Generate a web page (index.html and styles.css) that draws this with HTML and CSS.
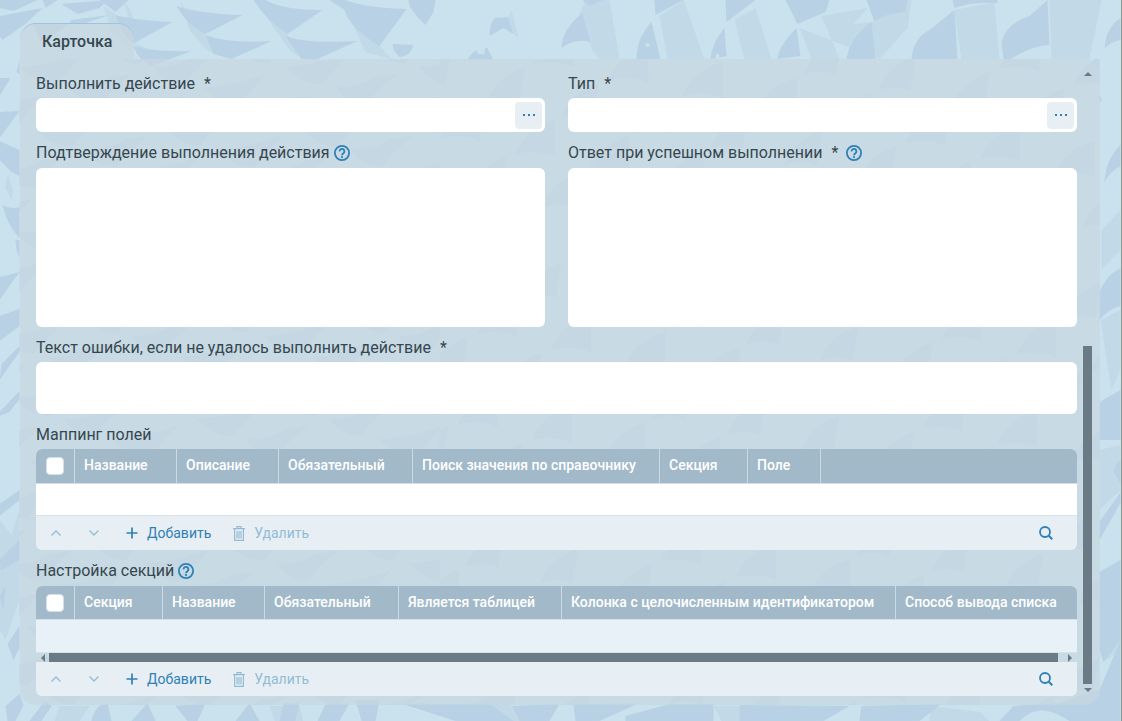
FILE: index.html
```html
<!DOCTYPE html>
<html lang="ru">
<head>
    <meta charset="UTF-8">
    <meta name="viewport" content="width=device-width, initial-scale=1.0">
    <title>Карточка</title>
    <link rel="stylesheet" href="styles.css">
</head>
<body>
    <svg class="backdrop" viewBox="0 0 1122 721" preserveAspectRatio="xMidYMid slice" aria-hidden="true">
        <defs>
            <pattern id="scales" width="86" height="64" patternUnits="userSpaceOnUse" patternTransform="rotate(-14)">
                <path d="M4 6Q34 12 70 8L34 32Q14 26 4 6z"/>
                <path d="M47 38Q70 44 86 38L86 52L74 62Q54 58 47 38zM0 38L24 40L0 52z"/>
            </pattern>
            <pattern id="folds" width="76" height="92" patternUnits="userSpaceOnUse" patternTransform="rotate(12)">
                <path d="M4 44Q8 18 36 2L44 38Q24 34 4 44z"/>
                <path d="M42 90Q44 66 72 48L74 84Q58 80 42 90z"/>
            </pattern>
        </defs>
        <g class="backdrop-mid">
            <path d="M125 0Q140 24 134 44L150 62L170 59L133 42zM346 8L380 46L392 59L366 52zM580 14L593 50L600 59L620 59L610 0L586 0zM512 10L519 38L505 24zM660 16L668 59L705 59L684 0zM735 20L745 59L772 59L756 8zM800 28L812 59L840 59L822 16L868 8L854 24L876 22L878 0L912 0L908 28L880 59zM955 10L962 59L1000 59L995 2zM1050 0L1052 59L1090 59L1102 0zM1102 230L1121 210V250L1102 270zM1101 320L1121 310V370L1112 390zM1100 450L1121 445V490L1100 510zM1100 600L1121 580V650L1104 662z"/>
            <path d="M180 0L188 14L205 32L214 54L205 48L190 30zM262 10L274 18L288 34L300 57L290 50zM104 6L116 14L122 34L135 48L128 49L112 30zM8 174L14 190L12 200L6 188z"/>
            <path d="M0 520L12 535L20 510V600L6 640L0 630zM60 706L90 706L80 721H55zM270 706L300 706L304 721H275zM480 706L510 704L520 721H484zM714 706H745V721H722zM930 706L980 712L990 721H930z"/>
        </g>
        <g class="backdrop-dark">
            <rect class="backdrop-soft" x="20" y="59" width="420" height="646" fill="url(#scales)"/>
            <rect class="backdrop-soft" x="440" y="59" width="660" height="646" fill="url(#folds)"/>
            <path d="M0 0H38L14 11L0 8zM0 16L43 8L26 24L3 40L0 36zM43 0H58L46 8zM40 42Q66 30 72 20L110 15L86 23H34zM62 4L108 0L100 8L78 14z"/>
            <path d="M100 0L129 0L116 12zM116 15Q132 20 173 22L133 44Q120 32 116 15zM177 6Q200 14 243 15L206 34Q188 26 177 6zM254 0L266 0Q282 10 323 10L288 34Q266 20 254 0zM206 35Q230 44 272 41L232 59L214 54zM286 36Q306 44 358 41L318 59H302zM134 46Q152 52 192 51L152 66Q138 60 134 46z"/>
            <path d="M330 0H346Q366 8 407 9L380 46Q350 28 345 10zM393 44L414 45Q411 56 400 57L394 50zM409 0H436L434 12L426 25Q416 16 410 6zM490 36Q490 20 498 17H508L514 34L504 28zM468 60Q474 48 488 48L494 60zM562 48Q562 30 583 13L591 42Q576 38 562 48zM583 0L604 0L590 6z"/>
            <path d="M637 59Q637 38 652 22L661 59zM655 0H684L656 15zM711 59Q712 44 725 28L727 56zM726 0H756L727 22zM778 59Q779 46 797 28L801 56zM786 0H830L826 12L798 24zM847 59Q850 38 872 22L876 59zM867 0H908L906 12Q882 14 875 22zM912 59Q914 38 930 30L955 10L958 59zM953 0H998V3Q970 2 955 8zM1002 42Q1006 24 1030 16L1048 0L1050 45Q1030 46 1012 59H1004zM1105 49Q1106 28 1121 18V40Q1110 42 1105 49z"/>
            <path d="M0 78L11 78L0 96zM20 60L17 72L20 74zM0 112L20 111L0 138zM0 141L20 150V176L12 172L0 160zM3 205Q12 210 20 207V238Q8 226 3 205zM16 240H20V258L17 250zM0 277L20 272L0 300zM0 316L20 309V326L0 341zM2 364L20 346V352L0 380zM0 412L20 391V399L10 412L0 416zM0 504L20 490V500L0 516zM0 560L20 540V560L2 570zM8 644L20 626V648L14 660zM0 596L6 586L4 610zM6 706L20 694L24 705L16 721H8z"/>
            <path d="M30 721L46 700L52 706L42 721zM92 721Q96 704 108 703L112 721zM132 721L148 703L156 721zM176 706L206 703L198 721H188zM236 721L250 703L260 721zM284 703H300L296 721H280zM326 704L350 703L340 721H318zM356 700H380L376 721H362zM400 703L450 704L490 703L514 721H456zM512 706L560 704L550 721H520zM574 704L640 703L600 721H576zM626 716L670 704H714V721H626zM740 705L850 706L824 721H740zM862 706L942 704L920 721H860zM1014 706L1060 703Q1080 694 1100 690L1121 640V721H1070Q1040 700 1020 721H1000z"/>
            <path d="M1100 59V94L1102 100L1100 104zM1105 182Q1106 160 1121 145V166Q1110 172 1105 182zM1100 292Q1106 276 1121 268V306Q1110 308 1100 320zM1100 402L1121 390V440L1100 440zM1114 471Q1116 464 1121 460V484zM1100 522L1121 492V503L1100 540zM1100 572L1121 560V640L1104 662L1100 650z"/>
        </g>
        <g class="backdrop-light">
            <circle cx="648" cy="45" r="2"/>
            <circle cx="718" cy="56" r="2"/>
            <path d="M497 11L507 9L508 17L498 18zM477 46L486 45L485 54L478 54z"/>
        </g>
    </svg>

    <svg class="sprite" aria-hidden="true">
        <symbol id="icon-help" viewBox="0 0 16 16">
            <circle cx="8" cy="8" r="7.1" fill="none" stroke="currentColor" stroke-width="1.8"/>
            <path d="M5.6 6.4a2.4 2.4 0 1 1 3.8 1.8C8.5 8.800 8 9.200 8 10.200" fill="none" stroke="currentColor" stroke-width="1.8"/>
            <circle cx="8" cy="12.100" r="1.1" fill="currentColor"/>
        </symbol>
        <symbol id="icon-dots" viewBox="0 0 12 4">
            <path d="M0 1h2v2H0zM5 1h2v2H5zM10 1h2v2h-2z" fill="currentColor"/>
        </symbol>
        <symbol id="icon-up" viewBox="0 0 12 8">
            <path d="M1.500 6.500L6 2l4.500 4.500" fill="none" stroke="currentColor" stroke-width="1.300"/>
        </symbol>
        <symbol id="icon-down" viewBox="0 0 12 8">
            <path d="M1.500 1.500L6 6l4.500-4.500" fill="none" stroke="currentColor" stroke-width="1.300"/>
        </symbol>
        <symbol id="icon-plus" viewBox="0 0 12 12">
            <path d="M6 0.500v11M0.500 6h11" fill="none" stroke="currentColor" stroke-width="1.700"/>
        </symbol>
        <symbol id="icon-trash" viewBox="0 0 12 15">
            <path d="M0 2.700h12M4 2.500V0.700h4v1.800M1.600 3v11.300h8.800V3M4 5v7.500M6 5v7.500M8 5v7.500" fill="none" stroke="currentColor" stroke-width="1.200"/>
        </symbol>
        <symbol id="icon-search" viewBox="0 0 14 14">
            <circle cx="6" cy="6" r="5" fill="none" stroke="currentColor" stroke-width="1.800"/>
            <path d="M9.500 9.500L13.300 13.300" stroke="currentColor" stroke-width="2"/>
        </symbol>
    </svg>

    <main class="page">
        <div class="tabs" role="tablist">
            <button type="button" class="tab" role="tab" aria-selected="true">Карточка</button>
        </div>

        <div class="panel">
            <form class="form">
                <div class="columns">
                    <div class="field">
                        <label class="label" for="action">Выполнить действие <span class="required">*</span></label>
                        <div class="lookup">
                            <input type="text" id="action" class="lookup-input">
                            <button type="button" class="lookup-button" aria-label="Выбрать действие"><svg width="12" height="4"><use href="#icon-dots"/></svg></button>
                        </div>
                    </div>
                    <div class="field">
                        <label class="label" for="type">Тип <span class="required">*</span></label>
                        <div class="lookup">
                            <input type="text" id="type" class="lookup-input">
                            <button type="button" class="lookup-button" aria-label="Выбрать тип"><svg width="12" height="4"><use href="#icon-dots"/></svg></button>
                        </div>
                    </div>
                    <div class="field">
                        <div class="label-row">
                            <label class="label" for="confirm">Подтверждение выполнения действия</label>
                            <button type="button" class="help" aria-label="Справка"><svg width="16" height="16"><use href="#icon-help"/></svg></button>
                        </div>
                        <textarea id="confirm" class="textarea textarea-tall"></textarea>
                    </div>
                    <div class="field">
                        <div class="label-row">
                            <label class="label" for="answer">Ответ при успешном выполнении <span class="required">*</span></label>
                            <button type="button" class="help help-required" aria-label="Справка"><svg width="16" height="16"><use href="#icon-help"/></svg></button>
                        </div>
                        <textarea id="answer" class="textarea textarea-tall"></textarea>
                    </div>
                </div>

                <div class="field">
                    <label class="label" for="error">Текст ошибки, если не удалось выполнить действие <span class="required">*</span></label>
                    <textarea id="error" class="textarea textarea-short"></textarea>
                </div>

                <section class="field">
                    <div class="label" id="mapping">Маппинг полей</div>
                    <div class="grid">
                        <div class="table-wrap">
                            <table class="table" aria-labelledby="mapping">
                                <colgroup>
                                    <col class="col-check">
                                    <col class="col-name">
                                    <col class="col-name">
                                    <col class="col-flag">
                                    <col class="col-lookup">
                                    <col class="col-section">
                                    <col class="col-field">
                                    <col>
                                </colgroup>
                                <thead>
                                    <tr>
                                        <th class="check-cell"><input type="checkbox" class="check" aria-label="Выбрать все"></th>
                                        <th>Название</th>
                                        <th>Описание</th>
                                        <th>Обязательный</th>
                                        <th>Поиск значения по справочнику</th>
                                        <th>Секция</th>
                                        <th>Поле</th>
                                        <th></th>
                                    </tr>
                                </thead>
                                <tbody>
                                    <tr><td colspan="8"></td></tr>
                                </tbody>
                            </table>
                        </div>
                        <div class="toolbar">
                            <button type="button" class="tool tool-move" disabled aria-label="Вверх"><svg width="12" height="8"><use href="#icon-up"/></svg></button>
                            <button type="button" class="tool tool-move" disabled aria-label="Вниз"><svg width="12" height="8"><use href="#icon-down"/></svg></button>
                            <button type="button" class="tool tool-add"><svg width="12" height="12"><use href="#icon-plus"/></svg>Добавить</button>
                            <button type="button" class="tool tool-delete" disabled><svg width="12" height="15"><use href="#icon-trash"/></svg>Удалить</button>
                            <button type="button" class="tool tool-search" aria-label="Поиск"><svg width="14" height="14"><use href="#icon-search"/></svg></button>
                        </div>
                    </div>
                </section>

                <section class="field">
                    <div class="label-row">
                        <div class="label" id="sections">Настройка секций</div>
                        <button type="button" class="help" aria-label="Справка"><svg width="16" height="16"><use href="#icon-help"/></svg></button>
                    </div>
                    <div class="grid">
                        <div class="table-wrap">
                            <table class="table table-tinted" aria-labelledby="sections">
                                <colgroup>
                                    <col class="col-check">
                                    <col class="col-section">
                                    <col class="col-name">
                                    <col class="col-flag">
                                    <col class="col-table">
                                    <col class="col-id">
                                    <col>
                                </colgroup>
                                <thead>
                                    <tr>
                                        <th class="check-cell"><input type="checkbox" class="check" aria-label="Выбрать все"></th>
                                        <th>Секция</th>
                                        <th>Название</th>
                                        <th>Обязательный</th>
                                        <th>Является таблицей</th>
                                        <th>Колонка с целочисленным идентификатором</th>
                                        <th>Способ вывода списка</th>
                                    </tr>
                                </thead>
                                <tbody>
                                    <tr><td colspan="7"></td></tr>
                                </tbody>
                            </table>
                        </div>
                        <div class="hscroll" aria-hidden="true">
                            <span class="arrow arrow-left"></span>
                            <span class="hscroll-thumb"></span>
                            <span class="arrow arrow-right"></span>
                        </div>
                        <div class="toolbar">
                            <button type="button" class="tool tool-move" disabled aria-label="Вверх"><svg width="12" height="8"><use href="#icon-up"/></svg></button>
                            <button type="button" class="tool tool-move" disabled aria-label="Вниз"><svg width="12" height="8"><use href="#icon-down"/></svg></button>
                            <button type="button" class="tool tool-add"><svg width="12" height="12"><use href="#icon-plus"/></svg>Добавить</button>
                            <button type="button" class="tool tool-delete" disabled><svg width="12" height="15"><use href="#icon-trash"/></svg>Удалить</button>
                            <button type="button" class="tool tool-search" aria-label="Поиск"><svg width="14" height="14"><use href="#icon-search"/></svg></button>
                        </div>
                    </div>
                </section>
            </form>

            <div class="vscroll" aria-hidden="true">
                <span class="arrow arrow-up"></span>
                <div class="vscroll-track">
                    <span class="vscroll-thumb"></span>
                </div>
                <span class="arrow arrow-down"></span>
            </div>
        </div>
    </main>
</body>
</html>
```

FILE: styles.css
```css
* {
    box-sizing: border-box;
}

body {
    margin: 0;
    min-height: 100vh;
    font-family: Roboto, "Liberation Sans", sans-serif;
    font-size: 16px;
    color: #36474f;
    background-color: #cae1ee;
    border-right: 1px solid #8b9a8c;
}

button, input, textarea {
    font: inherit;
    color: inherit;
    margin: 0;
    padding: 0;
    border: none;
    outline: none;
    background: none;
}

button {
    cursor: pointer;
}

svg {
    display: block;
}

.sprite {
    display: none;
}

/* background */
.backdrop {
    position: absolute;
    top: 0;
    left: 0;
    width: calc(100% - 1px);
    height: 100%;
    z-index: -1;
}

.backdrop-dark, .backdrop pattern {
    fill: #b9d1e4;
}

.backdrop-soft {
    opacity: 0.7;
}

.backdrop-mid {
    fill: #c2d9e8;
}

.backdrop-light {
    fill: #cae1ee;
}

.page {
    padding: 23px 21px 16px 20px;
}

/* tabs */
.tabs {
    display: flex;
}

.tab {
    height: 36px;
    padding: 0 22px;
    font-weight: 500;
    border-top: 1px solid #9fc3da;
    border-radius: 16px 16px 0 0;
    background-color: rgba(200, 215, 224, 0.7);
}

.panel {
    display: flex;
    gap: 6px;
    padding: 11px 8px 9px 16px;
    border-radius: 0 16px 16px 16px;
    background-color: rgba(200, 215, 224, 0.7);
}

/* form */
.form {
    flex: 1;
    min-width: 0;
    display: flex;
    flex-direction: column;
    gap: 7px;
}

.columns {
    display: grid;
    grid-template-columns: 1fr 1fr;
    gap: 7px 23px;
}

.field {
    display: flex;
    flex-direction: column;
    min-width: 0;
}

.label {
    line-height: 28px;
}

.label-row {
    display: flex;
    align-items: flex-start;
    gap: 4px;
    height: 29px;
}

.required {
    margin-left: 5px;
}

.help {
    display: flex;
    align-items: center;
    height: 28px;
    color: #2f80b5;
}

.help-required {
    margin-left: 4px;
}

.lookup {
    display: flex;
    align-items: center;
    height: 34px;
    padding: 3px;
    border-radius: 6px;
    background-color: #fff;
}

.lookup-input {
    flex: 1;
    min-width: 0;
    padding: 0 8px;
}

.lookup-button {
    display: flex;
    align-items: center;
    justify-content: center;
    width: 27px;
    height: 27px;
    border-radius: 4px;
    color: #2f80b5;
    background-color: #e7eff5;
}

.textarea {
    display: block;
    width: 100%;
    padding: 8px;
    border-radius: 6px;
    background-color: #fff;
    resize: none;
}

.textarea-tall {
    height: 159px;
}

.textarea-short {
    height: 52px;
}

/* tables */
.grid {
    border-radius: 6px;
    overflow: hidden;
}

.table-wrap {
    overflow: hidden;
}

.table {
    width: 100%;
    table-layout: fixed;
    border-collapse: separate;
    border-spacing: 0;
    font-size: 14px;
    background-color: #fff;
}

.col-check {
    width: 39px;
}

.col-name {
    width: 102px;
}

.col-flag {
    width: 134px;
}

.col-lookup {
    width: 247px;
}

.col-section {
    width: 88px;
}

.col-field {
    width: 73px;
}

.col-table {
    width: 163px;
}

.col-id {
    width: 334px;
}

.table th {
    height: 35px;
    padding: 0 0 2px 9px;
    font-weight: 500;
    text-align: left;
    white-space: nowrap;
    color: #fff;
    background-color: #a2b9c9;
    border-right: 1px solid #cbdbe5;
    border-bottom: 1px solid #d3e0e9;
}

.table th:last-child {
    border-right: none;
}

.table .check-cell {
    padding: 0 10px;
}

.table td {
    height: 32px;
    padding: 0;
    border-bottom: 1px solid #d7e3eb;
}

.table-tinted {
    background-color: #e9f1f8;
}

.table-tinted th {
    height: 34px;
}

.table-tinted td {
    height: 33px;
}

.check {
    appearance: none;
    display: block;
    width: 18px;
    height: 18px;
    border: 1px solid #d3e0e9;
    border-radius: 4px;
    background-color: #fff;
}

.toolbar {
    display: flex;
    align-items: center;
    height: 34px;
    padding: 0 24px 0 14px;
    font-size: 14px;
    color: #2f80b5;
    background-color: #e7eff5;
}

.tool {
    display: flex;
    align-items: center;
    gap: 9px;
}

.tool:disabled {
    color: #93bbd4;
    cursor: default;
}

.tool-move {
    margin-right: 26px;
}

.tool-add {
    margin-right: 22px;
}

.tool-search {
    margin-left: auto;
}

/* scrollbars */
.arrow {
    width: 0;
    height: 0;
    border: 4px solid transparent;
}

.arrow-up {
    border-bottom-color: #6b7b85;
    border-top: none;
}

.arrow-down {
    border-top-color: #6b7b85;
    border-bottom: none;
}

.arrow-left {
    border-right-color: #6b7b85;
    border-left: none;
}

.arrow-right {
    border-left-color: #6b7b85;
    border-right: none;
}

.hscroll {
    display: flex;
    align-items: center;
    gap: 4px;
    height: 9px;
    padding: 0 5px;
}

.hscroll-thumb {
    flex: 1;
    height: 9px;
    margin-right: 6px;
    background-color: #6b7b85;
}

.vscroll {
    display: flex;
    flex-direction: column;
    align-items: center;
    gap: 4px;
    width: 9px;
    padding: 2px 0 4px;
}

.vscroll-track {
    flex: 1;
    display: flex;
    flex-direction: column;
    justify-content: flex-end;
    width: 100%;
}

.vscroll-thumb {
    height: 56%;
    background-color: #6b7b85;
}
```
